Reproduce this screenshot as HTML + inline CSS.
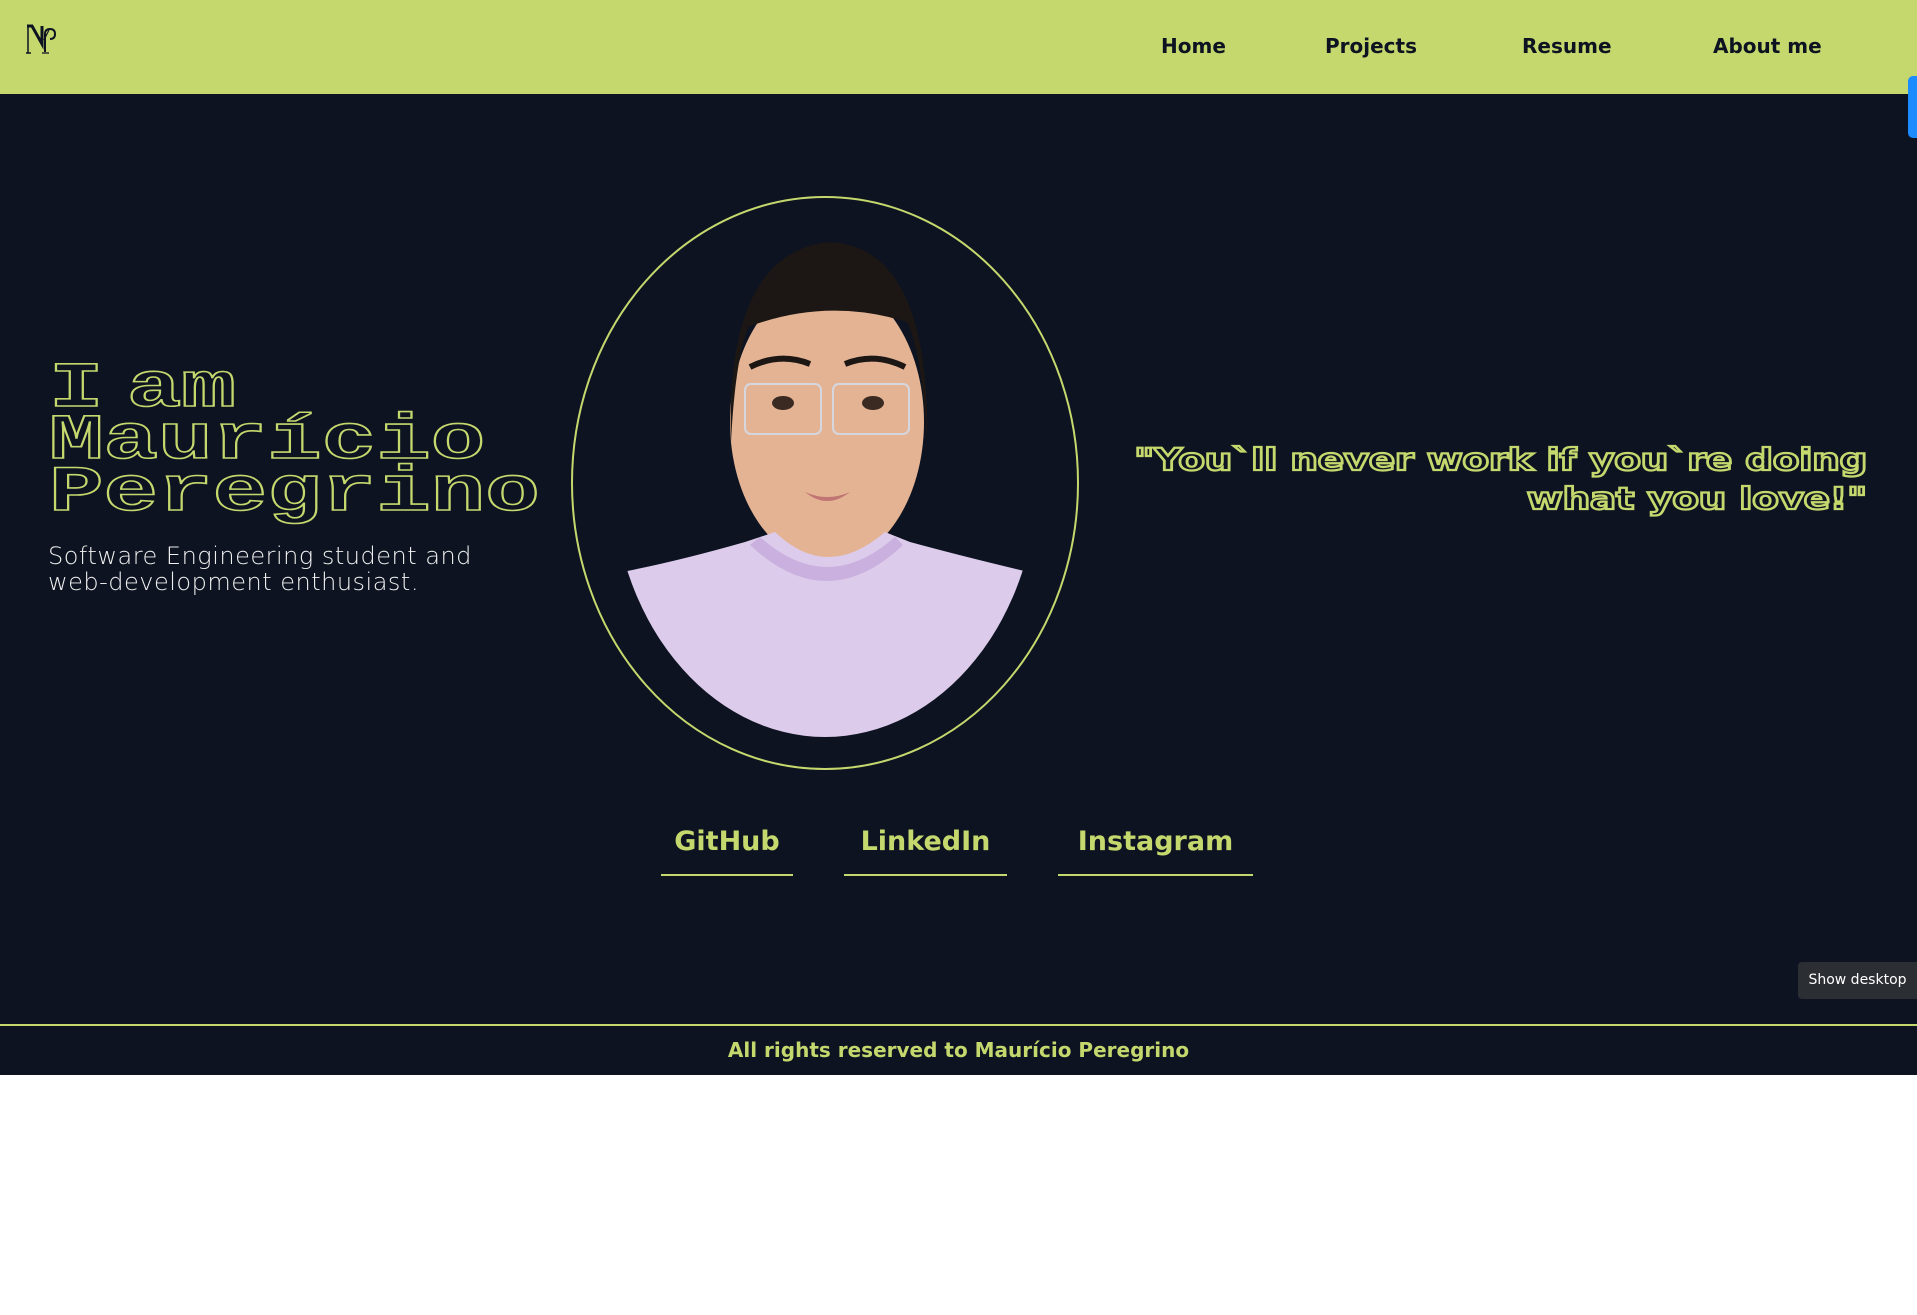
<!DOCTYPE html>
<html><head><meta charset="utf-8">
<style>
*{margin:0;padding:0;box-sizing:border-box}
html,body{width:1917px;height:1315px;background:#fff;overflow:hidden;font-family:"Liberation Sans",sans-serif}
.hdr{position:absolute;left:0;top:0;width:1917px;height:94px;background:#c5d86d}
.nav{position:absolute;top:34px;font:900 20px "DejaVu Sans",sans-serif;color:#0d1321}
.main{position:absolute;left:0;top:94px;width:1917px;height:931px;background:#0d1321}
.title{position:absolute;left:49px;top:364px;font:bold 64px/52px "Liberation Mono",monospace;color:transparent;-webkit-text-stroke:1.6px #c5d86d;transform:scaleX(1.42);transform-origin:left top;white-space:nowrap;word-spacing:-22px}
.sub{position:absolute;left:48px;top:543px;font:24px/26px "DejaVu Sans",sans-serif;color:#f0f0f0;letter-spacing:0.5px;font-weight:300}
.quote{position:absolute;right:50px;top:441px;width:900px;text-align:right;font:bold 30px/39px "DejaVu Sans",sans-serif;color:#0d1321;-webkit-text-stroke:2.2px #c5d86d;letter-spacing:-0.3px;transform:scaleX(1.3);transform-origin:right top}
.lnk{position:absolute;top:826px;font:900 27px "DejaVu Sans",sans-serif;color:#c5d86d;text-align:center;height:50px;border-bottom:2px solid #c5d86d}
.foot{position:absolute;left:0;top:1024px;width:1917px;height:51px;background:#0d1321;border-top:2px solid #c5d86d;text-align:center;font:900 20px/48px "DejaVu Sans",sans-serif;color:#c5d86d}
.tip{position:absolute;left:1798px;top:962px;width:119px;height:37px;background:#2b2e33;border-radius:4px 0 0 4px;color:#fff;font:14px/37px "DejaVu Sans",sans-serif;text-align:center}
</style></head><body>
<div class="hdr">
<svg style="position:absolute;left:24px;top:22px" width="40" height="40" viewBox="0 0 40 40">
<path d="M3 4h5l10 18V4" fill="none" stroke="#0d1321" stroke-width="3"/>
<path d="M4 4v27M2 31h5" stroke="#0d1321" stroke-width="1.5" fill="none"/>
<path d="M21 30V12q0-5 5-5 5 0 5 5t-5 5" stroke="#0d1321" stroke-width="2" fill="none"/>
<path d="M18 31h7M25 8l-5 10" stroke="#0d1321" stroke-width="1.2" fill="none"/>
</svg>
<div class="nav" style="left:1161px">Home</div>
<div class="nav" style="left:1325px">Projects</div>
<div class="nav" style="left:1522px">Resume</div>
<div class="nav" style="left:1713px">About me</div>
</div>
<div style="position:absolute;left:1908px;top:76px;width:9px;height:62px;background:#1a8cff;border-radius:5px 0 0 5px;z-index:3"></div>
<div class="main"></div>
<div class="title">I am<br>Maurício<br>Peregrino</div>
<div class="sub">Software Engineering student and<br>web-development enthusiast.</div>
<svg style="position:absolute;left:565px;top:192px" width="520" height="582" viewBox="0 0 520 582">
<defs><clipPath id="c"><ellipse cx="260" cy="280" rx="213" ry="265"/></clipPath></defs>
<ellipse cx="260" cy="291" rx="253" ry="286" fill="none" stroke="#c5d86d" stroke-width="2"/>
<g clip-path="url(#c)">
<rect x="215" y="290" width="92" height="100" fill="#d9a283"/>
<ellipse cx="262" cy="230" rx="97" ry="142" fill="#e4b393"/>
<path d="M166 250 Q160 60 265 50 Q365 55 362 250 Q357 160 342 130 Q262 105 183 135 Q170 170 166 250Z" fill="#1c1714"/>
<path d="M52 381 Q110 370 180 350 L210 340 Q262 390 320 340 L345 350 Q400 365 468 381 L500 600 L30 600Z" fill="#dccbea"/>
<path d="M195 345 Q262 405 330 345 L338 353 Q262 425 185 353Z" fill="#c9b0df"/>
<rect x="180" y="192" width="76" height="50" rx="6" fill="none" stroke="#d6d6de" stroke-width="2"/>
<rect x="268" y="192" width="76" height="50" rx="6" fill="none" stroke="#d6d6de" stroke-width="2"/>
<path d="M185 175 Q215 160 245 172 M280 172 Q310 160 340 175" stroke="#1c1714" stroke-width="6" fill="none"/>
<ellipse cx="218" cy="211" rx="11" ry="7" fill="#3a2a22"/>
<ellipse cx="308" cy="211" rx="11" ry="7" fill="#3a2a22"/>
<path d="M240 300 Q262 310 285 300 Q262 318 240 300Z" fill="#c07474"/>
</g>
</svg>
<div class="quote">"You`ll never work if you`re doing<br>what you love!"</div>
<div class="lnk" style="left:661px;width:132px">GitHub</div>
<div class="lnk" style="left:844px;width:163px">LinkedIn</div>
<div class="lnk" style="left:1058px;width:195px">Instagram</div>
<div class="tip">Show desktop</div>
<div class="foot">All rights reserved to Maurício Peregrino</div>
</body></html>
